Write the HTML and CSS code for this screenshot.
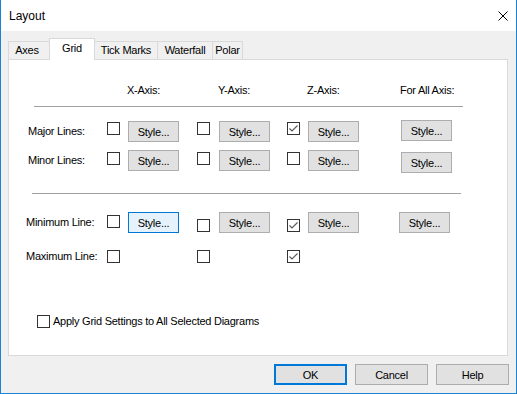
FILE: index.html
```html
<!DOCTYPE html>
<html>
<head>
    <link rel="stylesheet" href="styles.css">
</head>
<body>
    <div class="window">
        <div class="titlebar">
            <span class="title">Layout</span>
            <svg class="close" width="10" height="10" viewBox="0 0 10 10">
                <path d="M0.5 0.5 L9.5 9.5 M9.5 0.5 L0.5 9.5" stroke="#000" stroke-width="1" fill="none"/>
            </svg>
        </div>

        <div class="client">
            <!-- Tab strip -->
            <div class="tabs">
                <div class="tab tab-axes">Axes</div>
                <div class="tab tab-grid active">Grid</div>
                <div class="tab tab-tick">Tick Marks</div>
                <div class="tab tab-waterfall">Waterfall</div>
                <div class="tab tab-polar">Polar</div>
            </div>

            <div class="panel">
                <div class="row head">
                    <span></span>
                    <span></span>
                    <span class="col-head">X-Axis:</span>
                    <span></span>
                    <span class="col-head">Y-Axis:</span>
                    <span></span>
                    <span class="col-head">Z-Axis:</span>
                    <span class="col-head">For All Axis:</span>
                </div>

                <div class="sep sep-top"></div>

                <div class="row major">
                    <span class="label">Major Lines:</span>
                    <span class="cb"></span>
                    <button class="btn">Style...</button>
                    <span class="cb"></span>
                    <button class="btn">Style...</button>
                    <span class="cb checked"><svg viewBox="0 0 11 11"><polyline points="1.5,5.5 4,8 9.5,2.5"/></svg></span>
                    <button class="btn">Style...</button>
                    <button class="btn all-up">Style...</button>
                </div>

                <div class="row minor">
                    <span class="label">Minor Lines:</span>
                    <span class="cb"></span>
                    <button class="btn">Style...</button>
                    <span class="cb"></span>
                    <button class="btn">Style...</button>
                    <span class="cb"></span>
                    <button class="btn">Style...</button>
                    <button class="btn all-down">Style...</button>
                </div>

                <div class="sep sep-mid"></div>

                <div class="row minimum">
                    <span class="label wide">Minimum Line:</span>
                    <span class="cb first"></span>
                    <button class="btn focused">Style...</button>
                    <span class="cb"></span>
                    <button class="btn">Style...</button>
                    <span class="cb checked"><svg viewBox="0 0 11 11"><polyline points="1.5,5.5 4,8 9.5,2.5"/></svg></span>
                    <button class="btn">Style...</button>
                    <button class="btn all-left">Style...</button>
                </div>

                <div class="row maximum">
                    <span class="label wide">Maximum Line:</span>
                    <span class="cb"></span>
                    <span></span>
                    <span class="cb"></span>
                    <span></span>
                    <span class="cb checked"><svg viewBox="0 0 11 11"><polyline points="1.5,5.5 4,8 9.5,2.5"/></svg></span>
                    <span></span>
                    <span></span>
                </div>

                <div class="apply">
                    <span class="cb"></span>
                    <span class="apply-text">Apply Grid Settings to All Selected Diagrams</span>
                </div>
            </div>

            <div class="actions">
                <button class="btn big default">OK</button>
                <button class="btn big">Cancel</button>
                <button class="btn big">Help</button>
            </div>
        </div>
    </div>
</body>
</html>
```

FILE: styles.css
```css
body {
    margin: 0;
    font-family: "Liberation Sans", Arial, sans-serif;
    font-size: 11px;
    letter-spacing: -0.25px;
    color: #000;
}

.window {
    width: 517px;
    height: 394px;
    box-sizing: border-box;
    border: 1px solid #1883d7;
    border-top: none;
    background: #f0f0f0;
    display: flex;
    flex-direction: column;
}

.titlebar {
    height: 31px;
    flex-shrink: 0;
    background: #fff;
    display: flex;
    align-items: center;
    justify-content: space-between;
    padding: 0 8px;
}

.title {
    font-size: 12px;
    letter-spacing: 0;
}

.close {
    display: block;
}

.client {
    flex: 1;
    padding: 7px 8px 0 7px;
    display: flex;
    flex-direction: column;
}

/* tabs */
.tabs {
    display: flex;
    align-items: flex-end;
    height: 21px;
}

.tab {
    height: 18px;
    box-sizing: border-box;
    border: 1px solid #d9d9d9;
    border-bottom: none;
    background: #f0f0f0;
    line-height: 17px;
    text-align: center;
    margin-left: -1px;
    white-space: nowrap;
}

.tab-axes { width: 42px; margin-left: 0; padding-right: 4px; }
.tab-grid { width: 46px; }
.tab-tick { width: 64px; }
.tab-waterfall { width: 56px; }
.tab-polar { width: 31px; }

.tab.active {
    position: relative;
    z-index: 1;
    height: 22px;
    margin-bottom: -1px;
    background: #fff;
    line-height: 19px;
}

.panel {
    height: 297px;
    box-sizing: border-box;
    border: 1px solid #d9d9d9;
    background: #fff;
    display: flex;
    flex-direction: column;
}

/* grid rows */
.row {
    display: grid;
    grid-template-columns: 98px 21px 69px 22px 68px 21px 93px 51px;
    align-items: start;
    height: 21px;
    white-space: nowrap;
}

.head {
    margin-top: 24px;
    height: 13px;
    line-height: 13px;
}

.col-head {
    margin-left: -1px;
}

.sep {
    height: 1px;
    background: #a0a0a0;
}

.sep-top { margin: 9px 0 0 25px; width: 429px; }
.sep-mid { margin: 22px 0 0 23px; width: 429px; }

.major { margin-top: 14px; }
.minor { margin-top: 8px; }
.minimum { margin-top: 18px; }
.maximum { margin-top: 17px; height: 13px; }

.label {
    padding-left: 19px;
    line-height: 21px;
}

.label.wide {
    padding-left: 17px;
}

.maximum .label {
    line-height: 13px;
}

.cb {
    display: block;
    width: 13px;
    height: 13px;
    box-sizing: border-box;
    border: 1px solid #333;
    background: #fff;
}

.cb svg {
    display: block;
    width: 11px;
    height: 11px;
}

.cb polyline {
    fill: none;
    stroke: #5a5a5a;
    stroke-width: 1.2;
}

.major .cb { margin-top: 1px; }
.minor .cb { margin-top: 2px; }
.minimum .cb { margin-top: 7px; }
.minimum .cb.first { margin-top: 3px; }

.btn {
    width: 51px;
    height: 21px;
    box-sizing: border-box;
    border: 1px solid #adadad;
    background: #e1e1e1;
    padding: 0;
    font: inherit;
    letter-spacing: inherit;
    color: #000;
}

.btn.focused {
    border-color: #0078d7;
    background: #e5f1fb;
}

.all-up { margin-top: -1px; }
.all-down { margin-top: 2px; }
.all-left { margin-left: -2px; }

.apply {
    display: flex;
    align-items: center;
    margin: 52px 0 0 28px;
    line-height: 13px;
}

.apply-text {
    margin-left: 3px;
}

/* dialog buttons */
.actions {
    display: flex;
    justify-content: flex-end;
    gap: 8px;
    margin: 8px -1px 0 0;
}

.btn.big {
    width: 73px;
    height: 21px;
}

.btn.default {
    border: 2px solid #0078d7;
}
```
